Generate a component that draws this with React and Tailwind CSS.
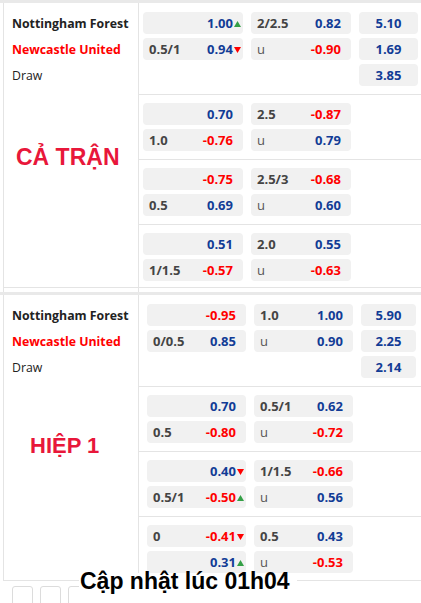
const FIRST = [
  {
    rows: [
      [{ value: '1.00', arrow: 'up' }, { label: '2/2.5', value: '0.82' }, '5.10'],
      [{ label: '0.5/1', value: '0.94', arrow: 'down' }, { label: 'u', value: '-0.90' }, '1.69'],
      [null, null, '3.85'],
    ],
  },
  {
    rows: [
      [{ value: '0.70' }, { label: '2.5', value: '-0.87' }],
      [{ label: '1.0', value: '-0.76' }, { label: 'u', value: '0.79' }],
    ],
  },
  {
    rows: [
      [{ value: '-0.75' }, { label: '2.5/3', value: '-0.68' }],
      [{ label: '0.5', value: '0.69' }, { label: 'u', value: '0.60' }],
    ],
  },
  {
    rows: [
      [{ value: '0.51' }, { label: '2.0', value: '0.55' }],
      [{ label: '1/1.5', value: '-0.57' }, { label: 'u', value: '-0.63' }],
    ],
  },
]

const HALF = [
  {
    rows: [
      [{ value: '-0.95' }, { label: '1.0', value: '1.00' }, '5.90'],
      [{ label: '0/0.5', value: '0.85' }, { label: 'u', value: '0.90' }, '2.25'],
      [null, null, '2.14'],
    ],
  },
  {
    rows: [
      [{ value: '0.70' }, { label: '0.5/1', value: '0.62' }],
      [{ label: '0.5', value: '-0.80' }, { label: 'u', value: '-0.72' }],
    ],
  },
  {
    rows: [
      [{ value: '0.40', arrow: 'down' }, { label: '1/1.5', value: '-0.66' }],
      [{ label: '0.5/1', value: '-0.50', arrow: 'up' }, { label: 'u', value: '0.56' }],
    ],
  },
  {
    rows: [
      [{ label: '0', value: '-0.41', arrow: 'down' }, { label: '0.5', value: '0.43' }],
      [{ value: '0.31', arrow: 'up' }, { label: 'u', value: '-0.53' }],
    ],
  },
]

function Arrow({ dir }) {
  if (dir === 'up') {
    return (
      <svg width="7" height="6" viewBox="0 0 7 6">
        <polygon points="0,6 3.5,0 7,6" fill="#34a046" />
      </svg>
    )
  }
  return (
    <svg width="7" height="6" viewBox="0 0 7 6">
      <polygon points="0,0 7,0 3.5,6" fill="#ff0000" />
    </svg>
  )
}

function Odd({ cell, width }) {
  if (!cell) return <div className={`h-[22px] ${width}`} />
  const neg = cell.value.startsWith('-')
  return (
    <div className={`flex h-[22px] items-center rounded-[4px] bg-[#f1f1f1] pt-[1px] pl-[6px] ${width}`}>
      <span
        className={`flex-1 ${cell.label === 'u' ? 'font-normal text-[#555]' : 'font-bold text-[#444]'}`}
      >
        {cell.label}
      </span>
      <span className={`font-bold ${neg ? 'text-[#ff0000]' : 'text-[#123c96]'}`}>{cell.value}</span>
      <span className="flex w-[10px] items-center pl-[1px]">{cell.arrow && <Arrow dir={cell.arrow} />}</span>
    </div>
  )
}

function Teams() {
  return (
    <div className="flex flex-col gap-[4px] pl-[8px] text-[12.3px]">
      <div className="flex h-[22px] items-center pt-[2px] font-bold text-[#222]">Nottingham Forest</div>
      <div className="flex h-[22px] items-center pt-[2px] font-bold text-[#ff0000]">Newcastle United</div>
      <div className="flex h-[22px] items-center pt-[2px] text-[#222]">Draw</div>
    </div>
  )
}

function Section({ blocks, title, half }) {
  const pad = half ? 'pl-[8px]' : 'pl-[4px]'
  const w = half ? 'w-[99px]' : 'w-[100px]'
  const w3 = half ? 'w-[55px]' : 'w-[59px]'
  return (
    <div className="ml-[3px] flex border-b border-l border-[#e4e4e4]">
      {/* team column */}
      <div className="w-[135px] shrink-0 border-r border-[#e4e4e4] pt-[9px]">
        <Teams />
        {half ? (
          <div className="mt-[55px] pl-[26px] font-['Liberation_Sans',Arial,sans-serif] text-[22px] leading-[26px] font-bold text-[#e8173a]">
            {title}
          </div>
        ) : (
          <div className="mt-[58px] pl-[12px] font-['Liberation_Sans',Arial,sans-serif] text-[23px] leading-[26px] font-bold text-[#e8173a]">
            {title}
          </div>
        )}
      </div>

      {/* odds */}
      <div className="flex-1">
        {blocks.map((b, i) => (
          <div
            key={i}
            className={`flex flex-col gap-[4px] ${pad} ${i === 0 ? 'pt-[9px]' : 'pt-2'} ${
              i === blocks.length - 1 ? (half ? 'pb-[7px]' : 'pb-[6px]') : 'border-b border-[#e4e4e4] pb-2'
            }`}
          >
            {b.rows.map((r, j) => (
              <div key={j} className="flex gap-[8px]">
                <Odd cell={r[0]} width={w} />
                <Odd cell={r[1]} width={w} />
                {r[2] && (
                  <div
                    className={`flex h-[22px] items-center justify-center rounded-[4px] bg-[#f1f1f1] pt-[1px] font-bold text-[#123c96] ${w3}`}
                  >
                    {r[2]}
                  </div>
                )}
              </div>
            ))}
          </div>
        ))}
      </div>
    </div>
  )
}

export default function App() {
  return (
    <div className="relative h-[603px] w-[421px] overflow-hidden bg-white font-['Open_Sans',sans-serif] text-[13px]">
      <div className="h-[3px] bg-[#e9e9e9]" />
      <Section blocks={FIRST} title="CẢ TRẬN" />

      {/* seam between the two captures */}
      <div className="ml-[3px] flex h-[4px] border-l border-[#e4e4e4]">
        <div className="w-[135px] border-r border-[#e4e4e4]" />
      </div>
      <div className="h-[3px] bg-[#e9e9e9]" />
      <Section blocks={HALF} title="HIỆP 1" half />

      {/* pager */}
      <div className="mt-[5px] flex gap-[7px] pl-[12px]">
        {[1, 2, 3, 4, 5].map((n) => (
          <div key={n} className="h-[20px] w-[21px] rounded-[3px] border border-[#dcdcdc]" />
        ))}
      </div>

      <div className="absolute top-[573px] left-[79px] h-[30px] w-[218px] bg-white">
        <div className="-mt-[3px] pl-[1px] font-['Liberation_Sans',Arial,sans-serif] text-[23px] leading-none font-bold text-black">
          Cập nhật lúc 01h04
        </div>
      </div>
    </div>
  )
}
